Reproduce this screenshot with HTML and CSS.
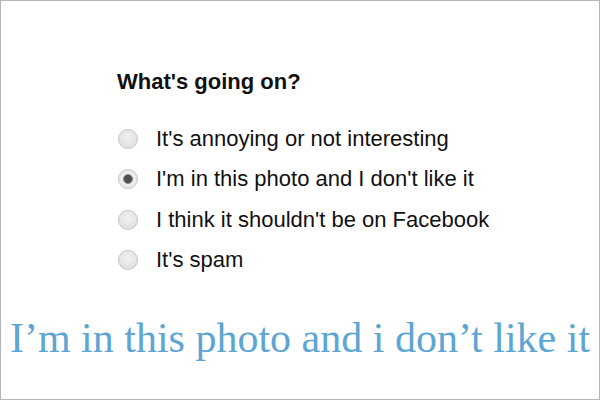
FILE: index.html
```html
<!DOCTYPE html>
<html lang="en">
<head>
  <meta charset="UTF-8">
  <title>What's going on?</title>
  <link rel="stylesheet" href="styles.css">
</head>
<body>
  <div class="frame">
    <div class="report">
      <h2>What's going on?</h2>
      <div class="options">
        <label class="option"><span class="radio"></span>It's annoying or not interesting</label>
        <label class="option"><span class="radio checked"></span>I'm in this photo and I don't like it</label>
        <label class="option"><span class="radio"></span>I think it shouldn't be on Facebook</label>
        <label class="option"><span class="radio"></span>It's spam</label>
      </div>
    </div>
    <p class="caption">I’m in this photo and i don’t like it</p>
  </div>
</body>
</html>
```

FILE: styles.css
```css
body { margin: 0; background: #fff; }
.frame { width: 598px; height: 398px; border: 1px solid #b3b6b9; overflow: hidden; }
.report { padding: 68px 0 0 116px; font-family: "Liberation Sans", Arial, sans-serif; color: #111; }
.report h2 { margin: 0; font-size: 22px; font-weight: bold; line-height: 26px; }
.options { display: flex; flex-direction: column; gap: 16.3px; margin-top: 32px; }
.option { display: flex; align-items: center; gap: 18px; font-size: 22px; line-height: 24px; padding-left: 1px; }
.radio { width: 18px; height: 18px; border-radius: 50%; border: 1px solid #c6c6c6; background: radial-gradient(circle at 50% 40%, #f2f2f2, #dadada); position: relative; }
.radio.checked { background: radial-gradient(circle, #ededed 55%, #d8d8d8); }
.radio.checked::after { content: ""; position: absolute; left: 4px; top: 4px; width: 8px; height: 8px; border-radius: 50%; background: #505050; border: 1px solid #888; }
.caption { margin: 42px 0 0; text-align: center; font-family: "Liberation Serif", "Times New Roman", serif; font-size: 42px; color: #5da5d3; line-height: 48px; }
```
